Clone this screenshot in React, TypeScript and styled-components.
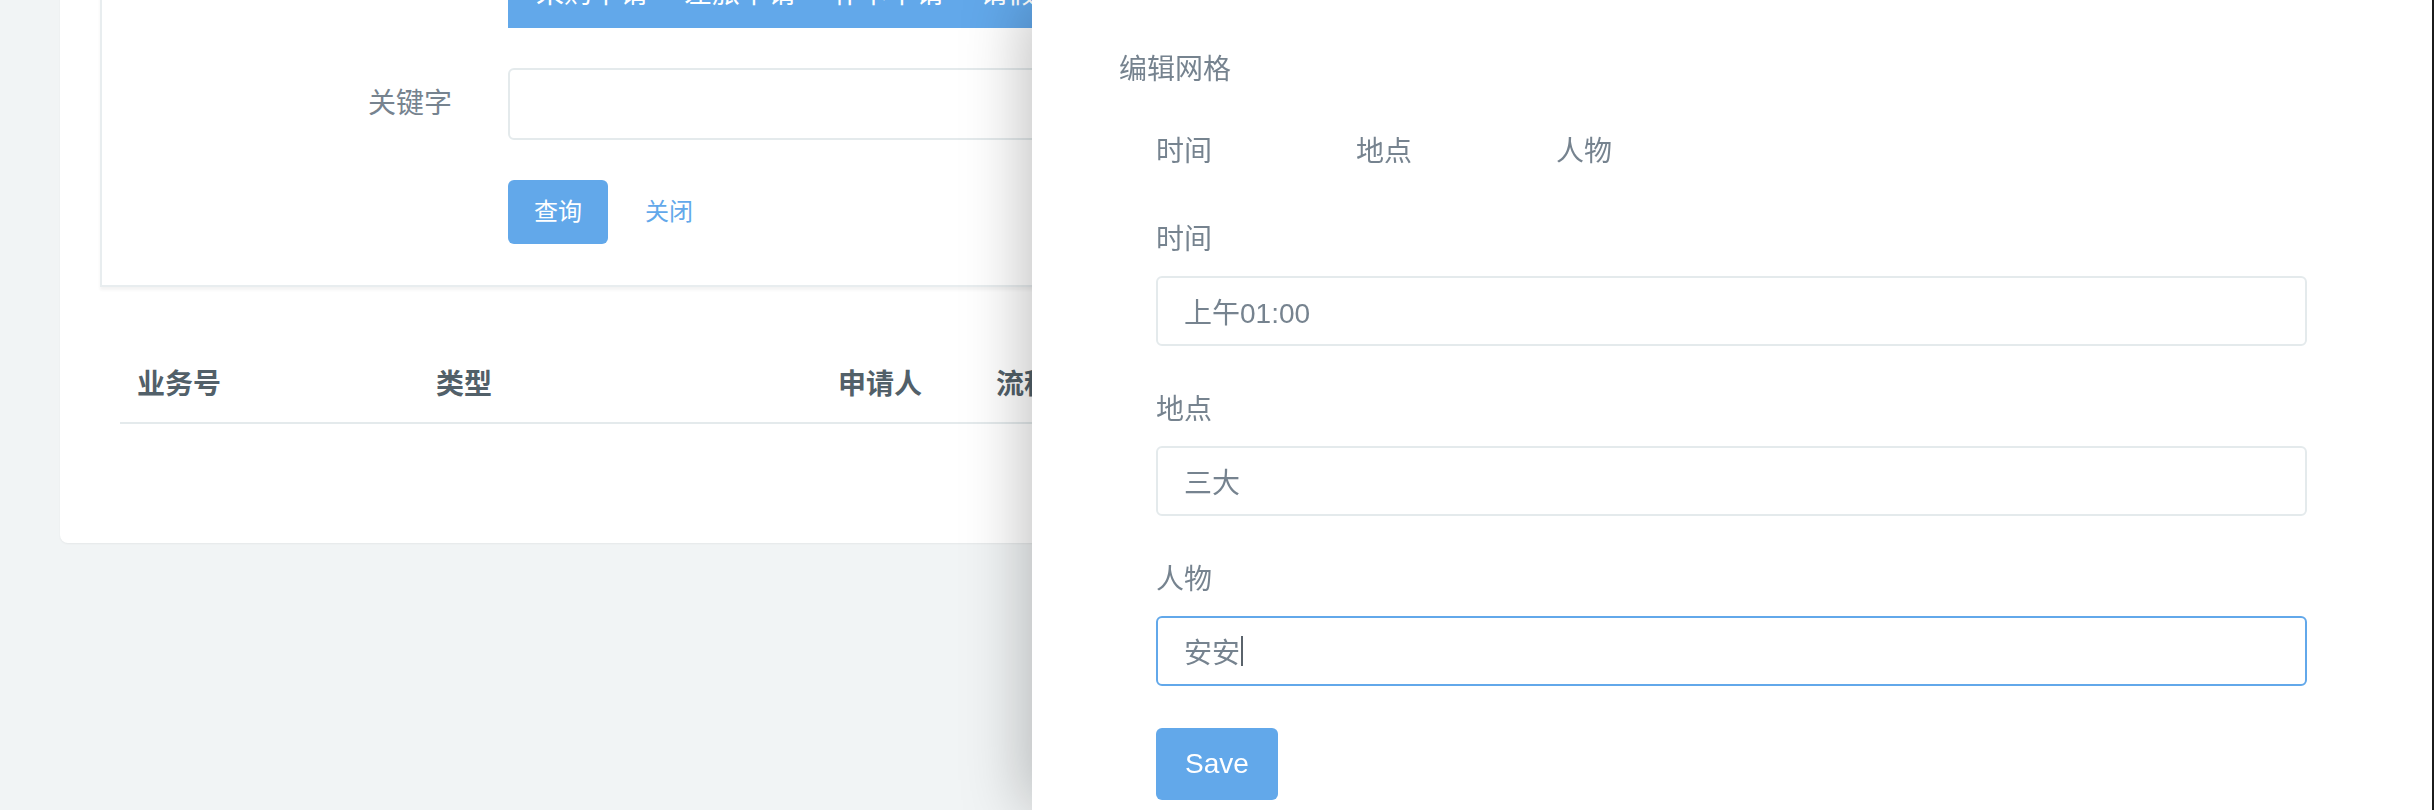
import React from "react";
import styled, { createGlobalStyle } from "styled-components";

const GlobalStyle = createGlobalStyle`
  html, body {
    margin: 0;
    padding: 0;
    width: 100%;
    height: 100%;
    overflow: hidden;
    background: #f1f4f5;
  }
  body {
    font-family: "Liberation Sans", "Noto Sans CJK SC", sans-serif;
    font-size: 28px;
    color: #76838f;
  }
  * { box-sizing: border-box; }
`;

const Page = styled.div`
  padding: 0 60px 0 60px;
  margin-top: -82px;
`;

const Card = styled.section`
  background: #ffffff;
  border-radius: 8px;
  box-shadow: 0 1px 2px rgba(0, 0, 0, 0.05);
  padding: 40px 40px 119px 40px;
`;

const FilterPanel = styled.div`
  border: 2px solid #e8edef;
  box-shadow: 0 3px 3px rgba(0, 0, 0, 0.05);
  padding: 0 0 41px 0;
  display: grid;
  grid-template-columns: 376px 1fr;
  column-gap: 30px;
  row-gap: 40px;
  align-items: center;
`;

const RowLabel = styled.label`
  text-align: right;
  padding-right: 26px;
  line-height: 44px;
  color: #76838f;
`;

const TypeTabs = styled.div`
  display: flex;
  height: 68px;
  align-items: center;
  background: #62a8ea;
  padding-left: 10px;
`;

const TypeTab = styled.span`
  padding: 0 18px;
  color: #ffffff;
  line-height: 40px;
  white-space: nowrap;
`;

const KeywordInput = styled.input`
  height: 72px;
  width: 100%;
  border: 2px solid #e4eaec;
  border-radius: 6px;
  font: inherit;
  padding: 0 26px;
  outline: none;
  background: #fff;
`;

const Actions = styled.div`
  display: flex;
  align-items: center;
  gap: 11px;
`;

const Button = styled.button<{ $link?: boolean }>`
  height: 64px;
  padding: 0 26px;
  border-radius: 6px;
  border: none;
  font-family: inherit;
  font-size: 24px;
  line-height: 64px;
  cursor: pointer;
  background: ${(p) => (p.$link ? "transparent" : "#62a8ea")};
  color: ${(p) => (p.$link ? "#62a8ea" : "#ffffff")};
`;

const Table = styled.table`
  margin: 61px 20px 0 20px;
  width: calc(100% - 40px);
  border-collapse: collapse;
  table-layout: fixed;
`;

const Th = styled.th`
  text-align: left;
  padding: 15px 17px;
  line-height: 44px;
  font-weight: 700;
  color: #526069;
  border-bottom: 2px solid #e4eaec;
  white-space: nowrap;
`;

const Drawer = styled.aside`
  position: fixed;
  top: 0;
  right: 0;
  bottom: 0;
  width: 1402px;
  background: #ffffff;
  border-right: 2px solid #1b1b1b;
  box-shadow: -6px 0 60px rgba(0, 0, 0, 0.26);
  padding: 48px 125px 0 87px;
  display: flex;
  flex-direction: column;
`;

const DrawerTitle = styled.h4`
  margin: 0;
  font-size: 28px;
  font-weight: 400;
  line-height: 44px;
  color: #76838f;
`;

const FieldTabs = styled.nav`
  display: flex;
  margin: 38px 0 0 37px;
`;

const FieldTab = styled.span`
  width: 200px;
  line-height: 44px;
  color: #76838f;
`;

const Form = styled.form`
  margin: 44px 0 0 37px;
  display: flex;
  flex-direction: column;
`;

const FieldGroup = styled.div`
  display: flex;
  flex-direction: column;
  gap: 14px;
  margin-bottom: 42px;
`;

const FieldLabel = styled.label`
  line-height: 44px;
  color: #76838f;
`;

const FieldBox = styled.div<{ $focused?: boolean }>`
  height: 70px;
  border: 2px solid ${(p) => (p.$focused ? "#62a8ea" : "#e4eaec")};
  border-radius: 6px;
  padding: 0 26px;
  display: flex;
  align-items: center;
  color: #76838f;
  background: #fff;
`;

const Caret = styled.span`
  display: inline-block;
  width: 2px;
  height: 30px;
  margin-left: 1px;
  background: #5a636b;
`;

const SaveButton = styled.button`
  align-self: flex-start;
  height: 72px;
  padding: 0 29px;
  border: none;
  border-radius: 6px;
  background: #62a8ea;
  color: #ffffff;
  font-family: "Liberation Sans", sans-serif;
  font-size: 28px;
`;

const fields = [
  { label: "时间", value: "上午01:00" },
  { label: "地点", value: "三大" },
  { label: "人物", value: "安安", focused: true },
];

export default function App() {
  return (
    <>
      <GlobalStyle />
      <Page>
        <Card>
          <FilterPanel>
            <span />
            <TypeTabs>
              {["采购申请", "差旅申请", "补卡申请", "请假申请", "报销申请"].map((t) => (
                <TypeTab key={t}>{t}</TypeTab>
              ))}
            </TypeTabs>
            <RowLabel>关键字</RowLabel>
            <KeywordInput />
            <span />
            <Actions>
              <Button>查询</Button>
              <Button $link>关闭</Button>
            </Actions>
          </FilterPanel>
          <Table>
            <colgroup>
              <col style={{ width: 299 }} />
              <col style={{ width: 402 }} />
              <col style={{ width: 158 }} />
              <col />
            </colgroup>
            <thead>
              <tr>
                <Th>业务号</Th>
                <Th>类型</Th>
                <Th>申请人</Th>
                <Th>流程</Th>
              </tr>
            </thead>
          </Table>
        </Card>
      </Page>
      <Drawer>
        <DrawerTitle>编辑网格</DrawerTitle>
        <FieldTabs>
          {fields.map((f) => (
            <FieldTab key={f.label}>{f.label}</FieldTab>
          ))}
        </FieldTabs>
        <Form onSubmit={(e) => e.preventDefault()}>
          {fields.map((f) => (
            <FieldGroup key={f.label}>
              <FieldLabel>{f.label}</FieldLabel>
              <FieldBox $focused={f.focused}>
                {f.value}
                {f.focused && <Caret />}
              </FieldBox>
            </FieldGroup>
          ))}
          <SaveButton type="submit">Save</SaveButton>
        </Form>
      </Drawer>
    </>
  );
}
